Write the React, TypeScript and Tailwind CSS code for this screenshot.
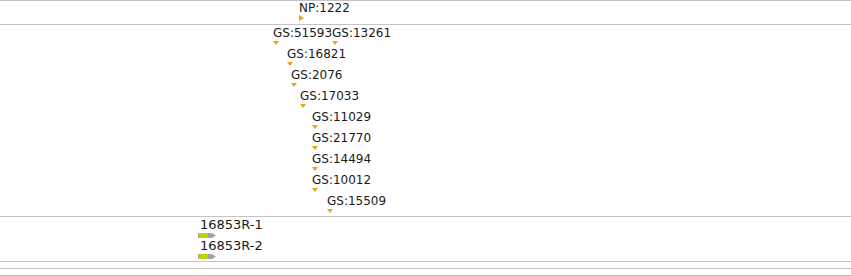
import React from 'react';

// features on the genomic tracks; x is the pixel position along the sequence
interface Feature {
  label: string;
  x: number;
}

const gsRows: Feature[][] = [
  [
    { label: 'GS:51593', x: 273 },
    { label: 'GS:13261', x: 332 },
  ],
  [{ label: 'GS:16821', x: 287 }],
  [{ label: 'GS:2076', x: 291 }],
  [{ label: 'GS:17033', x: 300 }],
  [{ label: 'GS:11029', x: 312 }],
  [{ label: 'GS:21770', x: 312 }],
  [{ label: 'GS:14494', x: 312 }],
  [{ label: 'GS:10012', x: 312 }],
  [{ label: 'GS:15509', x: 327 }],
];

const genes: Feature[] = [
  { label: '16853R-1', x: 198 },
  { label: '16853R-2', x: 198 },
];

const DownMarker: React.FC = () => (
  <svg width="6" height="4" viewBox="0 0 6 4" className="block">
    <polygon points="0,0 6,0 3,4" fill="#e8a31a" />
  </svg>
);

const RightMarker: React.FC = () => (
  <svg width="5" height="6" viewBox="0 0 5 6" className="block">
    <polygon points="0,0 5,3 0,6" fill="#e8a31a" />
  </svg>
);

const GeneBar: React.FC = () => (
  <svg width="18" height="5" viewBox="0 0 18 5" className="block">
    <rect x="0" y="0" width="1" height="5" fill="#a0a0a0" />
    <rect x="1" y="0" width="9" height="5" fill="#c2d200" />
    <polygon points="10,0 14,0 18,2.5 14,5 10,5" fill="#a4a4a4" />
  </svg>
);

const App: React.FC = () => {
  return (
    <div
      className="w-[851px] h-[276px] bg-white text-[12px] leading-[14px] text-[#1a1a1a] overflow-hidden"
      style={{ fontFamily: '"DejaVu Sans", "Liberation Sans", sans-serif' }}
    >
      <div className="flex flex-col border-t border-[#c4c4c4]">
        {/* NP track */}
        <div className="relative h-[24px] border-b border-[#c4c4c4]">
          <div className="absolute left-[299px] top-0 flex flex-col">
            <span className="whitespace-nowrap">NP:1222</span>
            <RightMarker />
          </div>
        </div>

        {/* GS track */}
        <div className="flex flex-col h-[192px] border-b border-[#c4c4c4]">
          {gsRows.map((row, i) => (
            <div key={i} className="relative h-[21px] shrink-0">
              {row.map((f) => (
                <div
                  key={f.label}
                  className="absolute top-[1px] flex flex-col gap-[1px]"
                  style={{ left: f.x }}
                >
                  <span className="whitespace-nowrap">{f.label}</span>
                  <DownMarker />
                </div>
              ))}
            </div>
          ))}
        </div>

        {/* gene track */}
        <div className="flex flex-col h-[45px] border-b border-[#c4c4c4]">
          {genes.map((g) => (
            <div key={g.label} className="relative h-[21px] shrink-0">
              <div className="absolute top-[1px] flex flex-col gap-[1px]" style={{ left: g.x }}>
                <span className="whitespace-nowrap pl-[2px] text-[13px] leading-[14px]">{g.label}</span>
                <GeneBar />
              </div>
            </div>
          ))}
        </div>

        <div className="h-[7px] border-b border-[#c4c4c4]" />
        <div className="h-[7px] border-b border-[#c4c4c4]" />
      </div>
    </div>
  );
};

export default App;
